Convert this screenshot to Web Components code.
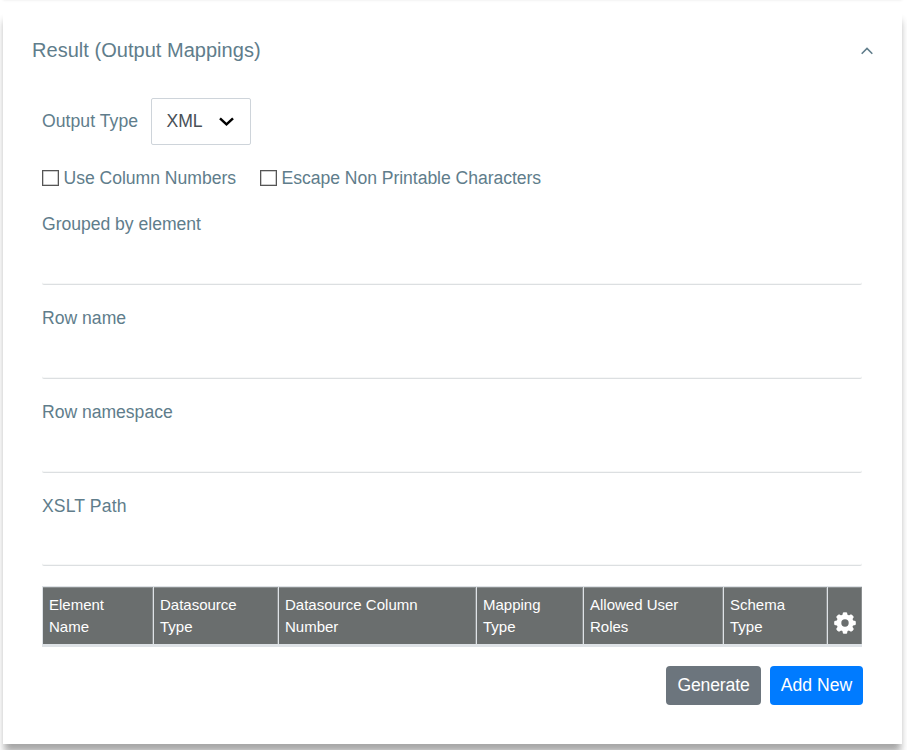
<!DOCTYPE html>
<html lang="en">
<head>
<meta charset="utf-8">
<title>Result (Output Mappings)</title>
<style>
html,body{margin:0;height:750px;overflow:hidden;background:#fff}
body{font-family:"Liberation Sans",Arial,sans-serif;font-size:17.6px;line-height:26px;color:#607d8b;display:flex;flex-direction:column}
</style>
</head>
<body>
<page-shell>
  <result-panel heading="Result (Output Mappings)">
    <form-row gap="13" style="height:47px">
      <span style="padding-bottom:2px;letter-spacing:.05px;margin-right:-.5px">Output Type</span><select-box>XML</select-box>
    </form-row>
    <form-row gap="24" style="height:26px;margin-top:20px">
      <check-box style="letter-spacing:-.03px">Use Column Numbers</check-box><check-box style="letter-spacing:-.05px">Escape Non Printable Characters</check-box>
    </form-row>
    <text-field style="margin-top:20px;letter-spacing:-.03px">Grouped by element</text-field>
    <text-field>Row name</text-field>
    <text-field style="letter-spacing:-.03px">Row namespace</text-field>
    <text-field style="height:73px;letter-spacing:.12px">XSLT Path</text-field>
    <mapping-table></mapping-table>
    <form-row gap="9" end style="height:39px;margin-top:19px">
      <action-button style="letter-spacing:-.15px">Generate</action-button><action-button primary>Add New</action-button>
    </form-row>
  </result-panel>
</page-shell>
<script>
const define = (name, html, setup) => customElements.define(name, class extends HTMLElement {
  constructor() {
    super();
    this.attachShadow({mode: "open"}).innerHTML = html;
  }
  connectedCallback() { if (setup) setup(this, this.shadowRoot); }
});

define("page-shell", `<style>
:host{display:flex;flex-direction:column;height:750px}
.previous{height:10px;margin:-10px 5px 10px 3px;box-shadow:0 0 3px rgba(0,0,0,.1)}
</style><div class="previous"></div><slot></slot>`);

define("result-panel", `<style>
:host{display:block;box-sizing:border-box;height:734px;margin:0 5px 0 3px;padding:25px 40px 0 39px;background:#fff;box-shadow:0 9px 7px -2px rgba(0,0,0,.28),0 10px 8px rgba(0,0,0,.1)}
header{display:flex;align-items:center;justify-content:space-between;height:30px;margin:0 -11px 33px -10px;font-size:20px;letter-spacing:.03px}
svg{display:block;margin-top:2px}
</style><header><span></span><svg width="12" height="8" viewBox="0 0 12 8" fill="none" stroke="#607d8b" stroke-width="1.6"><path d="M.7 6.8 6 1.5l5.3 5.3"/></svg></header><slot></slot>`,
(el, root) => root.querySelector("span").textContent = el.getAttribute("heading"));

define("form-row", `<style>
:host{display:flex;align-items:center;gap:var(--gap)}
:host([end]){justify-content:flex-end}
</style><slot></slot>`, el => el.style.setProperty("--gap", el.getAttribute("gap") + "px"));

define("select-box", `<style>
:host{display:flex;align-items:center;justify-content:space-between;box-sizing:border-box;width:100px;height:47px;padding:0 16px 0 15px;border:1px solid #ced4da;border-radius:2px;color:#495057}
span{padding-bottom:2px;letter-spacing:-.15px}
</style><span><slot></slot></span><svg width="15" height="10" viewBox="0 0 15 10" fill="none" stroke="#000" stroke-width="2.5"><path d="M1 1.3 7.5 7.3 14 1.3"/></svg>`);

define("check-box", `<style>
:host{display:flex;align-items:center;gap:5px}
i{box-sizing:border-box;width:16.5px;height:16px;border:1px solid #555;background:#fff;box-shadow:inset 0 0 0 .5px #999}
</style><i></i><slot></slot>`);

define("text-field", `<style>
:host{display:flex;flex-direction:column;height:74px;margin-bottom:20px}
span{height:26px}
div{flex:1;border-bottom:1px solid #dcdfe1;box-shadow:inset 0 -1px #f6f7f7;border-radius:0 0 2px 2px}
</style><span><slot></slot></span><div></div>`);

define("mapping-table", `<style>
:host{display:grid;grid-template-columns:110px 124px 197px 106px 139px 103px 34px;gap:1px;box-sizing:border-box;height:61px;padding:1px 1px 3px;background:#dee2e6;color:#fff;font-size:15px;line-height:22px}
div{padding:7px 6px 0;background:#6a6e6e;box-shadow:inset -1px 1px #8b8f90}
div.settings{display:flex;align-items:flex-end;justify-content:center;padding:0 0 10px}
svg{display:block}
</style>
<div>Element<br>Name</div><div>Datasource<br>Type</div><div>Datasource Column<br>Number</div><div>Mapping<br>Type</div><div>Allowed User<br>Roles</div><div>Schema<br>Type</div>
<div class="settings"><svg width="22" height="22" viewBox="0 0 22 22"><g fill="#fff"><circle cx="11" cy="11" r="8.4"/><g id="teeth"></g></g><circle cx="11" cy="11" r="3.7" fill="#6a6e6e"/></svg></div>`,
(el, root) => {
  root.getElementById("teeth").innerHTML = [0,45,90,135,180,225,270,315].map(a =>
    `<path transform="rotate(${a} 11 11)" d="M8.2 4 9 .5Q11-.2 13 .5L13.8 4Z"/>`).join("");
});

define("action-button", `<style>
:host{display:flex;align-items:center;justify-content:center;box-sizing:border-box;width:95px;height:39px;padding-bottom:2px;border-radius:4px;background:#6c757d;color:#fff}
:host([primary]){width:93px;background:#007bff;margin-right:-1px}
</style><slot></slot>`);
</script>
</body>
</html>
